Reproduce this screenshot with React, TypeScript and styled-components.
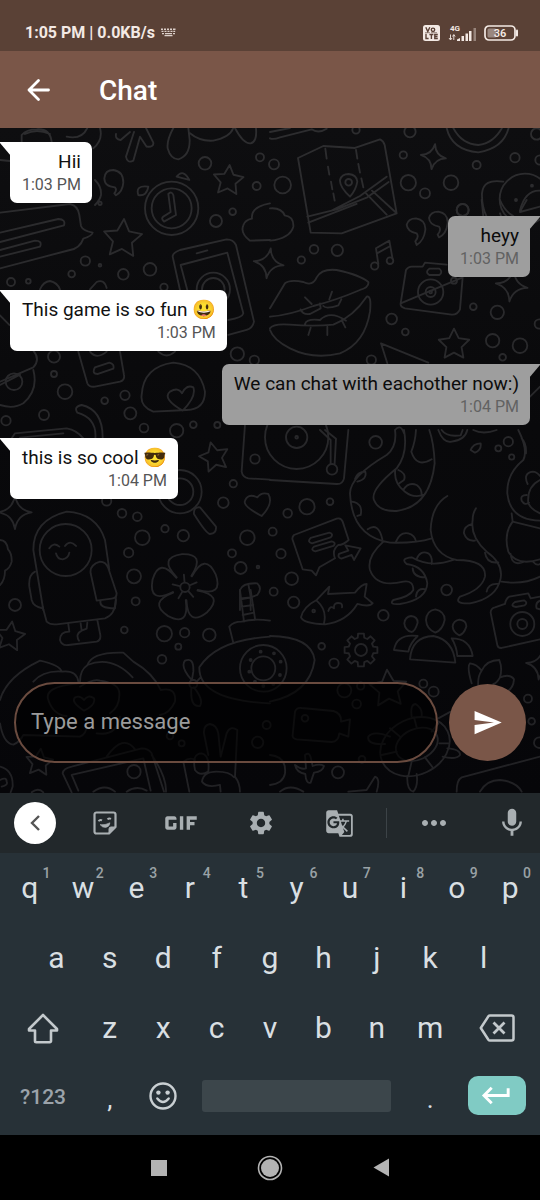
import React, { useState } from "react";
import styled, { createGlobalStyle } from "styled-components";
import {
  MdGif,
  MdGTranslate,
  MdKeyboardReturn,
  MdMic,
  MdMoreHoriz,
  MdSend,
  MdSettings,
} from "react-icons/md";

const GlobalStyle = createGlobalStyle`
  *, *::before, *::after { box-sizing: border-box; }
  body { margin: 0; background: #000; }
  body, button, input { font-family: Roboto, "Noto Color Emoji", sans-serif; }
  button { border: 0; padding: 0; background: none; color: inherit; cursor: pointer; }
  svg { display: block; }
`;

const Screen = styled.div`
  display: flex;
  flex-direction: column;
  min-height: 100vh;
`;

/* ---------- top bars ---------- */

const StatusBar = styled.header`
  display: flex;
  align-items: center;
  justify-content: space-between;
  height: 51px;
  padding: 14px 21px 0 25px;
  background: #5a4136;
  color: #f3e9e4;
`;

const StatusGroup = styled.div<{ $gap: number }>`
  display: flex;
  align-items: center;
  gap: ${(p) => p.$gap}px;
`;

const StatusText = styled.span`
  font-size: 16px;
  line-height: 20px;
  font-weight: 700;
`;

const AppBar = styled.div`
  display: flex;
  align-items: center;
  gap: 46px;
  height: 77px;
  padding: 0 24px;
  background: #7a5648;
  color: #fff;
`;

const Title = styled.h1`
  margin: 0;
  padding-top: 2px;
  font-size: 28px;
  line-height: 36px;
  font-weight: 500;
`;

/* ---------- chat ---------- */

const ChatArea = styled.main`
  position: relative;
  flex: 1;
  display: flex;
  flex-direction: column;
  justify-content: space-between;
  background: linear-gradient(#0e0e10, #09090b 45%, #060609);
`;

const Wallpaper = styled.svg`
  position: absolute;
  inset: 0;
  width: 100%;
  height: 100%;
  fill: none;
  stroke-linecap: round;
  stroke-linejoin: round;
`;

const Messages = styled.ul`
  position: relative;
  display: flex;
  flex-direction: column;
  gap: 13px;
  margin: 0;
  padding: 14px 10px;
  list-style: none;
`;

const Bubble = styled.li<{ $sent: boolean }>`
  position: relative;
  align-self: ${(p) => (p.$sent ? "flex-end" : "flex-start")};
  padding: 7px 11px 7px 12px;
  border-radius: ${(p) => (p.$sent ? "7px 0 7px 7px" : "0 7px 7px 7px")};
  background: ${(p) => (p.$sent ? "#9e9e9e" : "#fff")};
  color: ${(p) => (p.$sent ? "#0c0c0c" : "#111")};
  text-align: right;

  &::before {
    content: "";
    position: absolute;
    top: 0;
    ${(p) => (p.$sent ? "right" : "left")}: -10px;
    width: 11px;
    height: 14px;
    background: inherit;
    clip-path: ${(p) =>
      p.$sent
        ? "polygon(0 0, 100% 0, 100% 8%, 0 100%)"
        : "polygon(0 0, 100% 0, 100% 100%, 0 8%)"};
  }
`;

const MessageText = styled.p`
  margin: 0;
  font-size: 19px;
  line-height: 25px;
`;

const MessageTime = styled.time<{ $sent: boolean }>`
  display: block;
  font-size: 16px;
  line-height: 22px;
  color: ${(p) => (p.$sent ? "#626262" : "#555")};
`;

const Composer = styled.form`
  position: relative;
  display: flex;
  align-items: center;
  gap: 11px;
  padding: 0 14px 30px;
`;

const MessageInput = styled.input`
  flex: 1;
  min-width: 0;
  height: 81px;
  padding: 0 15px 2px;
  border: 2px solid #6a4b3f;
  border-radius: 41px;
  outline: 0;
  background: rgba(0, 0, 0, 0.6);
  color: #fff;
  font-size: 22px;

  &::placeholder {
    color: #9b9b9b;
    opacity: 1;
  }
`;

const SendButton = styled.button`
  display: grid;
  place-items: center;
  width: 77px;
  height: 77px;
  border-radius: 50%;
  background: #7a5648;
  color: #fff;
`;

/* ---------- keyboard ---------- */

const Toolbar = styled.div`
  display: grid;
  grid-template-columns: 70fr 70fr 82fr 78fr 78fr 16fr 80fr 66fr;
  align-items: center;
  height: 60px;
  background: #22282b;
  color: #a9afb2;
`;

const Tool = styled.button<{ $end?: boolean }>`
  display: flex;
  align-items: center;
  justify-content: ${(p) => (p.$end ? "flex-end" : "center")};
  height: 60px;
  min-width: 0;
  padding-right: ${(p) => (p.$end ? 11 : 0)}px;
`;

const CollapseCircle = styled.span`
  display: grid;
  place-items: center;
  width: 42px;
  height: 42px;
  border-radius: 50%;
  background: #fff;
  color: #555;
`;

const ToolDivider = styled.span`
  justify-self: center;
  width: 1px;
  height: 30px;
  background: #3c4347;
`;

const Keys = styled.div`
  display: flex;
  flex-direction: column;
  padding: 0 3px 7px;
  background: #273137;
  color: #d9dfe2;
`;

const KeyRow = styled.div<{ $columns: string; $height?: number; $inset?: number }>`
  display: grid;
  grid-template-columns: ${(p) => p.$columns};
  align-items: center;
  height: ${(p) => p.$height ?? 70}px;
  padding: 0 ${(p) => p.$inset ?? 0}%;
`;

const keyKinds = {
  letter: { size: 30, weight: 400, color: "inherit", top: 0 },
  label: { size: 21, weight: 500, color: "#9ba3aa", top: 2 },
  mark: { size: 26, weight: 400, color: "inherit", top: 6 },
};

const Key = styled.button<{ $kind?: keyof typeof keyKinds }>`
  position: relative;
  display: grid;
  place-items: center;
  height: 65px;
  padding-top: ${(p) => keyKinds[p.$kind ?? "letter"].top}px;
  font-size: ${(p) => keyKinds[p.$kind ?? "letter"].size}px;
  font-weight: ${(p) => keyKinds[p.$kind ?? "letter"].weight};
  line-height: 36px;
  color: ${(p) => keyKinds[p.$kind ?? "letter"].color};
`;

const KeyHint = styled.span`
  position: absolute;
  top: 9px;
  right: 6px;
  font-size: 14px;
  line-height: 16px;
  font-weight: 500;
  color: #9aa2a6;
`;

const SpaceKey = styled.button`
  height: 32px;
  margin: 0 13px 0 12px;
  border-radius: 3px;
  background: #3c464b;
`;

const EnterKey = styled.button`
  display: grid;
  place-items: center;
  justify-self: center;
  width: 58px;
  height: 39px;
  border-radius: 10px;
  background: #80cbc4;
  color: #fff;
`;

const NavBar = styled.nav`
  display: flex;
  justify-content: center;
  height: 65px;
  background: #000;
`;

const NavButton = styled.button`
  display: grid;
  place-items: center;
  width: 111px;
  height: 65px;
`;

/* ---------- icons ---------- */

const StatusKeyboardIcon = () => (
  <svg width="15" height="9" viewBox="0 0 15 9" fill="currentColor" opacity="0.85">
    <path d="M0 .5h2v1.4H0zM3 .5h2v1.4H3zM6 .5h2v1.4H6zM9 .5h2v1.4H9zM12 .5h2.5v1.4H12zM.5 2.7h2v1.4h-2zM3.5 2.7h2v1.4h-2zM6.5 2.7h2v1.4h-2zM9.5 2.7h2v1.4h-2zM12.3 2.7h1.9v1.4h-1.9zM1 4.9h2v1.3H1zM4 4.9h7v1.3H4zM12 4.9h2v1.3h-2zM3.5 7h8v1.3h-8z" />
  </svg>
);

const VolteIcon = () => (
  <svg width="17" height="16" viewBox="0 0 17 16">
    <rect width="17" height="16" rx="2.5" fill="#f3e9e4" />
    <g fill="none" stroke="#5a4136" strokeWidth="1.4">
      <path d="M2.8 2.2 4.8 6.5 6.8 2.2M3 8.8v4.7h2.6M6.4 9.5h4M8.4 9.5v4.6M14.8 9.5h-3v4h3M11.8 11.5h2.7" />
      <circle cx="10" cy="4.8" r="1.7" />
    </g>
    <path d="M2 7.7h5M8 7.7h6" stroke="#5a4136" strokeWidth=".6" />
  </svg>
);

const SignalIcon = () => (
  <svg width="28" height="18" viewBox="0 0 28 18" fill="#f3e9e4">
    <text x="2" y="7" fontSize="8" fontWeight="700">
      4G
    </text>
    <path d="M9 17v-1.5l3-1.5v3zM13.5 12H16v5h-2.5zM17.5 9.5H20V17h-2.5zM21 7h2.500v10H21z" />
    <path d="M25.500 4H28v13h-2.500z" opacity=".4" />
    <path d="M2.500 10.500v5M1 14l1.500 2L4 14M5.800 16v-5M4.500 12.500l1.300-2 1.300 2" stroke="#f3e9e4" strokeWidth=".9" fill="none" />
  </svg>
);

const BatteryIcon = () => (
  <svg width="35" height="16" viewBox="0 0 35 16">
    <rect x="1" y="1" width="30" height="14" rx="4" fill="none" stroke="#f3e9e4" strokeWidth="1.7" />
    <rect x="3.5" y="3.5" width="9" height="9" rx="1.5" fill="#9a8880" />
    <path d="M33 5.500v5" stroke="#f3e9e4" strokeWidth="2" strokeLinecap="round" />
    <text x="16" y="12" textAnchor="middle" fontSize="11" fontWeight="600" fill="#f3e9e4">
      36
    </text>
  </svg>
);

const BackArrowIcon = () => (
  <svg width="29" height="26" viewBox="0 0 29 26" fill="none" stroke="#fff" strokeWidth="2.8" strokeLinecap="round" strokeLinejoin="round">
    <path d="M24.5 13H5M14.5 3.500 5 13l9.500 9.500" />
  </svg>
);

const ChevronIcon = () => (
  <svg width="16" height="18" viewBox="0 0 16 18" fill="none" stroke="currentColor" strokeWidth="2.4">
    <path d="M12 2 5 9l7 7" />
  </svg>
);

const StickerIcon = () => (
  <svg width="24" height="24" viewBox="0 0 24 24" fill="none" stroke="currentColor" strokeWidth="2.2" strokeLinejoin="round">
    <path d="M3.5 1.5h17a2 2 0 0 1 2 2V16l-6.500 6.500H3.500a2 2 0 0 1-2-2v-17a2 2 0 0 1 2-2z" />
    <path d="M22.5 16H18a2 2 0 0 0-2 2v4.500z" fill="currentColor" strokeWidth="1" />
    <path d="M5.5 10.200q1.500-2 3.500-.8M14.500 8.400q1.500-1.600 3.500-.6" strokeWidth="1.900" />
    <path d="M7 13.600q5 .8 10-1.800-.5 4.300-4.300 4.600-3.600.2-5.700-2.800z" fill="currentColor" strokeWidth=".6" />
  </svg>
);

const ShiftIcon = () => (
  <svg width="32" height="32" viewBox="0 0 32 32" fill="none" stroke="#c3c9cc" strokeWidth="2.600" strokeLinejoin="round">
    <path d="M16 3 2 17v1.500h6V29a1.200 1.200 0 0 0 1.200 1.200h13.600A1.200 1.200 0 0 0 24 29V18.500h6V17z" />
  </svg>
);

const BackspaceIcon = () => (
  <svg width="36" height="28" viewBox="0 0 36 28" fill="none" stroke="#c3c9cc" strokeWidth="2.500" strokeLinejoin="round">
    <path d="M11 1.500h21.500a2 2 0 0 1 2 2v21a2 2 0 0 1-2 2H11q-1 0-1.600-.8L1.800 14 9.400 2.300Q10 1.500 11 1.500z" />
    <path d="m14.500 8.500 11 11M25.500 8.500l-11 11" strokeWidth="2.800" />
  </svg>
);

const SmileyIcon = () => (
  <svg width="28" height="28" viewBox="0 0 28 28" fill="none" stroke="#c9cfd2" strokeWidth="2.400">
    <circle cx="14" cy="14" r="12.500" />
    <path d="M8.300 16.500q5.700 7 11.400 0" strokeLinecap="round" />
    <circle cx="9.400" cy="10.600" r="2.200" fill="#c9cfd2" stroke="none" />
    <circle cx="18.600" cy="10.600" r="2.200" fill="#c9cfd2" stroke="none" />
  </svg>
);

/* ---------- wallpaper ---------- */

const polar = (cx: number, cy: number, r: number, deg: number) => {
  const a = (deg * Math.PI) / 180;
  return `${(cx + r * Math.sin(a)).toFixed(1)} ${(cy - r * Math.cos(a)).toFixed(1)}`;
};

const Star = ({ x, y, r, turn = 0 }: { x: number; y: number; r: number; turn?: number }) => (
  <path
    d={
      "M" +
      Array.from({ length: 10 }, (_, i) => polar(x, y, i % 2 ? r * 0.5 : r, turn + i * 36)).join("L") +
      "Z"
    }
  />
);

const Sparkle = ({ x, y, r, turn = 8 }: { x: number; y: number; r: number; turn?: number }) => (
  <path
    d={
      "M" +
      polar(x, y, r, turn) +
      [0, 90, 180, 270]
        .map((d) => `Q${polar(x, y, r * 0.2, turn + d + 45)} ${polar(x, y, r, turn + d + 90)}`)
        .join("") +
      "Z"
    }
  />
);

const Gear = ({ x, y, r }: { x: number; y: number; r: number }) => (
  <>
    <path
      d={
        "M" +
        Array.from({ length: 8 }, (_, i) =>
          [
            polar(x, y, r * 0.76, i * 45 - 15),
            polar(x, y, r, i * 45 - 10),
            polar(x, y, r, i * 45 + 10),
            polar(x, y, r * 0.76, i * 45 + 15),
          ].join("L"),
        ).join("L") +
        "Z"
      }
    />
    <circle cx={x} cy={y} r={r * 0.36} />
  </>
);

const Flower = ({ x, y }: { x: number; y: number }) => (
  <g transform={`translate(${x} ${y})`}>
    {[0, 72, 144, 216, 288].map((a) => (
      <g key={a} transform={`rotate(${a - 5})`}>
        <path d="M-22 -32Q-74 -96 0 -100Q72 -96 22 -32" />
        <path d="M0 -16V-38" />
      </g>
    ))}
    <circle r="14" />
  </g>
);

type Dot = [number, number, number];

type Patch = { x: number; y: number; dots: Dot[]; lines: string[]; shapes?: React.ReactNode };

/* Each patch is a piece of the wallpaper, drawn at three times its size. */
const patches: Patch[] = [
  {
    x: 0,
    y: 0,
    dots: [[615, 490, 19], [780, 472, 12], [770, 558, 12], [515, 625, 80], [515, 625, 60]],
    lines: [
      "M65 425V405Q80 388 110 388Q150 385 155 425M75 402Q110 385 150 402",
      "M200 410Q245 420 262 384M300 384Q310 420 280 445",
      "M348 402Q345 418 362 420L390 396M402 396L378 470Q382 492 400 482L420 410L440 440Q462 442 460 428L438 384",
      "M520 384Q500 420 503 445Q512 478 535 478Q570 468 569 420L565 384",
      "M570 400Q600 425 640 422Q690 412 700 384M705 384Q730 432 752 430Q772 425 768 384",
      "M345 562Q313 560 313 535Q315 510 340 510Q370 514 370 548Q368 575 348 586L343 580Q352 570 345 562Z",
      "M285 540Q305 560 303 585Q300 600 285 615",
      "M415 585Q405 555 445 560Q440 590 415 585ZM530 530Q550 505 568 540Z",
      "M505 582Q515 572 520 585L528 645L492 665Q482 655 490 650L512 636Z",
      "M0 480L30 483",
    ],
    shapes: <Star x={685} y={542} r={47} turn={5} />,
  },
  {
    x: 270,
    y: 0,
    dots: [
      [258, 390, 11], [420, 395, 17], [400, 465, 11], [12, 493, 15], [38, 555, 25], [415, 548, 23],
      [543, 548, 22], [465, 580, 15], [620, 495, 12], [735, 473, 14], [800, 402, 17], [578, 630, 18],
      [765, 597, 76], [738, 600, 3], [786, 557, 3], [236, 547, 10], [810, 480, 14],
    ],
    lines: [
      "M0 396L60 384M0 415Q10 420 30 412L125 388Q145 402 170 386",
      "M84 474L160 438L255 444L330 418Q340 422 344 435L380 640L215 700L122 698Z",
      "M166 446L170 476M174 500L178 524M183 545L187 568M190 580L194 602M258 450L262 476M265 492L270 518M274 535L280 562",
      "M240 590Q208 560 210 540Q215 522 236 522Q260 524 262 545Q258 570 240 590Z",
      "M185 632L270 588L350 530M112 650L200 628L292 592L356 546M288 580L350 644M306 572L376 636M115 668L260 612",
      "M530 384Q545 450 625 457Q700 445 716 384M550 384Q575 432 625 435Q670 430 696 384",
      "M700 545Q640 535 636 580Q635 620 650 650M750 632Q765 570 810 572M690 640Q700 675 730 690",
    ],
    shapes: <Sparkle x={490} y={470} r={38} />,
  },
  {
    x: 0,
    y: 200,
    dots: [
      [648, 63, 18], [698, 35, 10], [256, 183, 14], [300, 196, 4], [215, 222, 10], [370, 223, 16],
      [450, 208, 19], [33, 246, 12], [85, 244, 7], [492, 262, 11], [640, 268, 50], [640, 268, 34],
      [42, 545, 25], [162, 470, 18], [162, 522, 9], [195, 575, 22], [712, 462, 20], [763, 481, 14],
      [300, 10, 5],
    ],
    lines: [
      "M0 38L210 12Q235 18 238 45L243 78Q248 92 278 98Q276 108 250 116Q240 145 210 150L0 205",
      "M0 98L175 57Q198 58 192 76L0 126M0 150L105 122Q128 122 120 140L0 170",
      "M810 120L750 122Q720 100 730 76Q735 60 756 56Q752 20 810 10",
      "M540 270L518 170Q518 158 540 150L680 118Q700 118 708 135L762 365Q758 385 740 390L685 405",
      "M562 270L542 195L682 158L730 340Q728 352 685 360M590 160L622 151",
      "M120 268Q130 245 150 243Q172 248 180 268M270 268L290 246Q312 236 320 264",
      "M0 545L100 502Q122 478 100 452M0 555L60 524M100 510Q116 570 70 610Q40 628 0 615M0 346L28 375",
      "M235 455L262 550Q268 562 285 560L360 545Q375 540 372 525L360 455",
      "M285 502L328 488Q344 492 340 506L294 522Q274 522 285 502ZM270 455Q290 480 320 455M475 455Q500 478 525 455",
      "M425 585Q430 500 520 488Q600 495 615 575Q615 628 560 630L460 635Q420 620 425 585Z",
      "M548 632Q485 595 510 575Q535 560 546 580Q560 552 580 562Q590 590 548 632Z",
    ],
    shapes: (
      <>
        <Star x={368} y={117} r={60} turn={4} />
        <Sparkle x={806} y={190} r={45} />
      </>
    ),
  },
  {
    x: 270,
    y: 200,
    dots: [
      [578, 30, 18], [132, 148, 13], [94, 180, 11], [202, 151, 17], [365, 357, 16], [406, 396, 10],
      [610, 320, 10], [682, 337, 20], [668, 422, 20], [750, 437, 22], [698, 472, 10], [304, 480, 14],
      [552, 242, 9], [808, 372, 14], [482, 276, 38], [482, 276, 15], [482, 276, 4], [314, 198, 11], [360, 182, 10],
    ],
    lines: [
      "M0 25Q34 22 44 46Q72 50 70 80Q60 115 0 122",
      "M440 100Q412 95 410 74Q415 55 438 55Q468 60 466 90Q462 122 440 135L436 124Q448 110 440 100Z",
      "M507 80Q479 75 477 54Q482 35 505 35Q535 40 533 70Q529 102 507 112L503 104Q515 90 507 80Z",
      "M325 192L318 145L358 122L368 178M321 160L361 138",
      "M0 325L45 250Q60 238 100 246Q128 260 140 232Q155 205 200 210Q270 225 295 246Q298 262 270 270Q200 300 130 318Q60 345 0 350",
      "M0 385Q10 370 60 374Q130 380 190 374Q250 350 290 290Q305 285 300 335Q285 430 210 460Q130 480 60 445Q10 420 0 390",
      "M92 328Q98 345 120 342L152 325L150 310M160 318Q168 328 205 316L214 298M105 292L125 312M186 275L178 298",
      "M105 372Q110 355 150 360Q180 330 228 362M122 383L115 405M172 380V405M215 360L226 382",
      "M392 310L408 210Q415 198 430 200L458 200L465 188L530 194M578 232L570 328Q562 345 545 344L405 325Q390 320 392 310Z",
      "M478 206H508Q520 216 508 225H478Q464 216 478 206Z",
      "M352 490L333 430L475 488M635 0L640 48M690 0Q705 35 730 48M750 35L770 0M750 36L810 20",
      "M780 590L810 560",
    ],
    shapes: (
      <>
        <Sparkle x={725} y={257} r={48} />
        <Star x={552} y={434} r={48} />
      </>
    ),
  },
  {
    x: 0,
    y: 390,
    dots: [
      [375, 16, 14], [314, 32, 10], [391, 70, 18], [132, 75, 15], [18, 92, 14], [432, 114, 13],
      [530, 122, 20], [580, 104, 10], [652, 105, 9], [765, 207, 14], [700, 281, 11], [670, 338, 16],
      [366, 370, 13], [412, 380, 13], [495, 416, 11], [427, 443, 22], [550, 437, 17], [742, 443, 22],
      [386, 488, 14], [696, 490, 12], [722, 534, 18], [774, 531, 4], [402, 559, 21], [407, 634, 12],
      [45, 645, 18], [320, 333, 14], [540, 305, 65], [540, 305, 40], [197, 480, 78],
    ],
    lines: [
      "M308 147Q310 60 245 45Q220 50 232 68Q292 85 286 147M35 145L45 130L200 115Q230 120 250 145M60 143L190 130",
      "M735 105L725 245Q728 262 745 265L810 269",
      "M582 372Q580 350 600 352L648 410Q650 430 630 432Q618 430 582 372Z",
      "M785 378Q735 352 734 336Q742 308 772 322Q785 305 805 312Q822 340 785 378Z",
      "M130 660L100 480Q100 390 200 365Q290 370 315 450L328 540",
      "M148 475Q160 455 178 470M195 468Q210 448 228 468M168 490Q172 508 188 508Q205 505 208 488",
      "M272 550Q268 525 300 515Q318 515 325 535L350 610Q350 625 335 626L290 632Z",
      "M105 545Q85 555 88 590L95 630Q100 650 128 655M302 632Q295 655 345 655L348 620",
      "M0 450Q20 450 24 478Q36 490 35 515Q30 535 15 542Q15 570 0 585",
      "M720 660L720 600Q728 578 772 580Q788 595 772 615L752 622V660M722 625L752 622M745 582L752 620",
    ],
    shapes: (
      <>
        <Star x={643} y={202} r={46} turn={-14} />
        <Sparkle x={45} y={367} r={50} turn={0} />
        <Flower x={555} y={592} />
      </>
    ),
  },
  {
    x: 270,
    y: 430,
    dots: [
      [80, 22, 32], [80, 22, 4], [80, 22, 95], [186, 118, 16], [317, 37, 19], [715, 35, 14], [685, 55, 9],
      [725, 81, 8], [111, 230, 23], [180, 215, 10], [53, 250, 13], [8, 305, 12], [33, 371, 14],
      [65, 446, 19], [11, 485, 12], [71, 517, 17], [340, 556, 16], [530, 480, 16], [155, 649, 10],
      [192, 700, 14], [131, 543, 4], [757, 582, 36], [757, 582, 15],
    ],
    lines: [
      "M235 0L222 145Q218 163 200 162L0 150M165 0L198 26L194 100M150 0L182 30L182 100",
      "M375 0Q382 50 350 75Q240 140 240 190Q245 320 360 338Q440 340 485 325M375 0Q392 -20 402 10",
      "M402 0Q415 70 380 115Q300 180 312 210Q325 245 380 243Q480 230 494 100Q492 40 478 0",
      "M438 0Q436 35 424 65Q440 115 485 88M376 118Q370 160 405 185Q430 205 460 195",
      "M255 147Q262 125 286 125Q292 148 262 155M245 215Q280 220 272 255L262 258M293 298Q325 275 337 328",
      "M378 335Q390 305 415 310Q435 315 438 335M385 120Q410 130 402 150L388 160M400 180Q415 155 440 165Q455 175 455 195",
      "M532 198Q485 225 482 300Q490 375 560 390Q650 390 645 440Q635 480 570 500Q550 522 600 520Q680 505 692 445Q700 400 650 365Q600 320 608 270Q608 250 618 235",
      "M340 335Q290 380 300 420Q320 475 400 455Q430 450 430 480Q420 500 370 510Q355 525 390 522Q470 510 472 460Q465 410 410 402Q390 385 425 382Q480 415 550 390",
      "M607 282Q580 290 582 310Q590 335 615 332M645 368Q650 402 685 397M650 485Q655 458 687 462M440 387Q450 360 475 370Q488 380 485 402M428 415Q430 442 466 442M438 500Q440 472 468 478",
      "M505 0Q520 40 545 35Q585 30 592 0M515 0Q530 22 572 16L578 0M610 0Q640 15 680 0M602 60Q610 40 632 40Q635 60 615 68Z",
      "M745 0Q775 60 760 90Q710 130 712 190Q720 270 810 272M755 25Q770 40 768 70",
      "M773 162Q758 130 788 125Q800 125 810 138M810 150Q770 170 775 220Q785 240 810 250M770 195Q750 195 755 212Q765 228 777 218",
      "M725 250L728 275L810 295M728 275Q700 310 715 365Q740 410 810 388M722 372Q726 410 760 396M790 396Q800 408 810 402M695 455Q760 465 810 440",
      "M72 315Q65 322 68 330L98 418L125 422L138 436L148 412L195 385Q185 360 205 345Q220 345 236 330L218 275Q213 262 200 266Z",
      "M122 324L178 308Q192 312 182 322L126 340Q110 336 122 324ZM132 350L185 334Q200 338 190 348L136 364Q120 360 132 350Z",
      "M207 372L235 362L226 346L272 355L252 390L245 375L214 386Q202 382 207 372Z",
      "M93 562Q100 530 140 510L178 470L174 492L255 488Q275 462 290 462L284 500L308 520Q300 532 262 522Q230 575 165 583Q100 580 93 562ZM140 512Q172 540 162 580",
      "M175 543Q180 525 192 535Q190 515 212 520Q218 524 216 532",
      "M420 688Q425 620 490 618Q550 630 556 698ZM372 660Q380 610 443 618Q420 640 415 665ZM545 625Q600 625 608 678L562 678Q560 650 545 625Z",
      "M423 558Q443 560 443 578Q435 605 424 606Q405 600 403 580Q405 560 423 558ZM496 538Q525 545 524 570Q518 600 496 608Q470 598 468 570Q470 542 496 538ZM568 569Q590 572 589 590Q582 612 568 616Q550 608 548 590Q550 572 568 569Z",
      "M810 628L695 654Q684 655 682 645L662 548Q662 535 675 532L705 522Q708 505 718 500L775 490L782 505L810 500",
      "M735 516L762 511Q775 518 764 526L738 531Q718 528 735 516ZM810 512Q795 518 800 535L810 538",
    ],
    shapes: <Gear x={273} y={660} r={50} />,
  },
  {
    x: 0,
    y: 590,
    dots: [
      [373, 120, 10], [493, 131, 23], [554, 128, 14], [628, 135, 19], [535, 170, 9], [486, 208, 13],
      [510, 438, 10], [545, 460, 9], [773, 457, 17], [402, 545, 20], [800, 405, 12], [790, 235, 70],
      [790, 235, 36], [752, 210, 3], [782, 185, 3], [748, 245, 3], [765, 275, 3], [822, 190, 3],
      [842, 215, 3], [840, 255, 3], [820, 282, 3], [790, 288, 3], [580, 282, 12],
    ],
    lines: [
      "M128 50L140 95Q150 105 170 103L315 85Q345 75 348 30M205 103L208 125Q180 125 180 150Q185 168 205 165L290 155Q305 150 300 130L292 90",
      "M242 100L245 122Q225 132 237 152M262 98L260 116L245 122",
      "M720 0L732 95M752 0L765 85M722 28L755 22M725 50L760 45M728 75L762 68",
      "M810 140Q650 150 598 232Q596 330 810 340M700 158L688 110Q700 95 725 95Q760 85 810 92",
      "M575 270Q540 230 555 212Q582 200 580 245L576 268M582 292Q612 330 600 348Q570 352 574 295M590 275L602 262",
      "M0 330Q20 260 120 212Q180 225 185 245Q230 240 235 275M100 275Q130 240 190 245",
      "M240 275Q240 240 262 226Q275 185 370 188L400 215Q460 250 482 300Q530 290 525 335Q510 370 480 375M262 225Q335 195 398 262",
      "M240 290Q280 265 300 272Q358 280 358 310Q360 350 330 370M235 280Q130 290 145 330Q160 375 200 378",
      "M252 362Q210 335 226 322Q240 315 252 330Q265 312 282 325Q288 345 252 362Z",
      "M0 400Q10 460 40 464Q60 455 70 435L240 440Q262 430 260 400M290 430Q350 440 360 380",
      "M215 607L188 550Q190 535 215 530L425 475Q445 475 455 490L492 605M235 602L215 555L430 505L452 602M320 500Q370 430 405 478M455 495Q500 560 498 605",
      "M280 605Q315 580 345 605M380 605Q410 585 440 602M95 607Q115 592 130 607",
      "M625 495L612 430Q610 405 630 402Q650 405 655 430L662 500L680 430Q690 405 712 420L705 560Q720 580 720 605",
      "M585 510Q570 500 550 515L568 605M585 540Q575 490 605 490Q630 495 625 545Q600 560 585 540ZM606 575Q610 545 650 545Q690 545 702 562M606 575Q620 595 660 585L662 605",
      "M0 530Q40 540 38 590L32 607M0 570Q20 560 20 575Q25 585 5 590",
    ],
    shapes: (
      <>
        <Star x={30} y={140} r={46} turn={8} />
        <Star x={118} y={518} r={42} turn={6} />
      </>
    ),
  },
  {
    x: 270,
    y: 640,
    dots: [
      [223, 151, 21], [272, 138, 11], [260, 192, 13], [460, 131, 12], [491, 155, 15], [774, 176, 12],
      [785, 244, 10], [204, 397, 18], [276, 358, 10], [105, 235, 10], [808, 308, 16],
    ],
    lines: [
      "M0 -12Q125 -10 134 60Q120 160 0 185",
      "M68 285L75 215Q80 202 95 204L190 213Q215 220 213 245L240 238L235 290L208 280Q205 305 185 306L80 298Q66 295 68 285Z",
      "M425 230Q420 192 437 192Q458 205 455 228M505 235L542 215M532 325Q572 328 570 345Q558 360 518 350M412 408Q410 450 430 455Q445 440 440 402M345 312Q290 315 295 290Q310 270 360 290",
      "M360 265L390 290M432 232L440 262M505 250L485 275M535 310L508 310M490 385L465 352M415 408L425 365M335 345L380 335",
      "M605 130Q590 80 600 70Q620 72 635 92Q650 60 688 60Q698 85 690 112Q720 100 732 118Q730 150 700 160M635 92Q622 110 625 140M690 112Q680 130 670 132",
      "M75 375Q95 390 108 385L105 345Q118 335 122 352L128 378Q150 370 162 378Q158 395 132 398L122 428Q108 432 106 402Q80 398 75 375Z",
      "M0 345Q50 350 45 400Q40 430 0 435M560 455Q560 420 575 412L810 350M630 455Q650 420 690 420Q740 425 755 455M235 455L290 450L315 410Q332 415 320 455M30 455Q60 430 100 455",
    ],
    shapes: (
      <>
        <g transform="rotate(-25 435 320)">
          <ellipse cx="435" cy="320" rx="108" ry="84" />
          <ellipse cx="443" cy="316" rx="66" ry="46" />
        </g>
        <Star x={355} y={147} r={58} turn={-4} />
        <Sparkle x={812} y={75} r={44} />
      </>
    ),
  },
];

const DoodleWallpaper = () => (
  <Wallpaper viewBox="0 128 540 665" preserveAspectRatio="xMidYMin slice" aria-hidden="true">
    <defs>
      <linearGradient id="ink" gradientUnits="userSpaceOnUse" x1="0" y1="128" x2="0" y2="793">
        <stop offset="0" stopColor="#2d2d2f" />
        <stop offset="1" stopColor="#212124" />
      </linearGradient>
      <mask id="doodles" maskUnits="userSpaceOnUse" x="0" y="128" width="540" height="665">
        <g stroke="#fff" strokeWidth="5.500">
          {patches.map((p) => (
            <g key={`${p.x}-${p.y}`} transform={`translate(${p.x} ${p.y}) scale(0.3333)`}>
              {p.dots.map(([cx, cy, r], i) => (
                <circle key={i} cx={cx} cy={cy} r={r} />
              ))}
              <path d={p.lines.join("")} />
              {p.shapes}
            </g>
          ))}
        </g>
      </mask>
    </defs>
    <rect x="0" y="128" width="540" height="665" fill="url(#ink)" mask="url(#doodles)" />
  </Wallpaper>
);

/* ---------- data ---------- */

const messages = [
  { text: "Hii", time: "1:03 PM", sent: false },
  { text: "heyy", time: "1:03 PM", sent: true },
  { text: "This game is so fun 😃", time: "1:03 PM", sent: false },
  { text: "We can chat with eachother now:)", time: "1:04 PM", sent: true },
  { text: "this is so cool 😎", time: "1:04 PM", sent: false },
];

export default function App() {
  const [draft, setDraft] = useState("");
  const type = (s: string) => setDraft((d) => d + s);

  return (
    <>
      <GlobalStyle />
      <Screen>
        <StatusBar>
          <StatusGroup $gap={6}>
            <StatusText>1:05 PM | 0.0KB/s</StatusText>
            <StatusKeyboardIcon />
          </StatusGroup>
          <StatusGroup $gap={8}>
            <VolteIcon />
            <SignalIcon />
            <BatteryIcon />
          </StatusGroup>
        </StatusBar>

        <AppBar>
          <button type="button" aria-label="Back">
            <BackArrowIcon />
          </button>
          <Title>Chat</Title>
        </AppBar>

        <ChatArea>
          <DoodleWallpaper />
          <Messages>
            {messages.map((m) => (
              <Bubble key={m.text} $sent={m.sent}>
                <MessageText>{m.text}</MessageText>
                <MessageTime $sent={m.sent}>{m.time}</MessageTime>
              </Bubble>
            ))}
          </Messages>
          <Composer onSubmit={(e) => e.preventDefault()}>
            <MessageInput
              aria-label="Message"
              placeholder="Type a message"
              value={draft}
              onChange={(e) => setDraft(e.target.value)}
            />
            <SendButton type="submit" aria-label="Send">
              <MdSend size={31} />
            </SendButton>
          </Composer>
        </ChatArea>

        <Toolbar>
          <Tool type="button" aria-label="Collapse toolbar">
            <CollapseCircle>
              <ChevronIcon />
            </CollapseCircle>
          </Tool>
          <Tool type="button" aria-label="Stickers">
            <StickerIcon />
          </Tool>
          <Tool type="button" aria-label="GIF">
            <MdGif size={54} />
          </Tool>
          <Tool type="button" aria-label="Settings">
            <MdSettings size={28} />
          </Tool>
          <Tool type="button" aria-label="Translate">
            <MdGTranslate size={29} />
          </Tool>
          <ToolDivider />
          <Tool type="button" aria-label="More">
            <MdMoreHoriz size={36} />
          </Tool>
          <Tool type="button" aria-label="Voice input" $end>
            <MdMic size={34} />
          </Tool>
        </Toolbar>

        <Keys>
          <KeyRow $columns="repeat(10, 1fr)">
            {[..."qwertyuiop"].map((c, i) => (
              <Key key={c} type="button" onClick={() => type(c)}>
                {c}
                <KeyHint>{(i + 1) % 10}</KeyHint>
              </Key>
            ))}
          </KeyRow>
          <KeyRow $columns="repeat(9, 1fr)" $inset={5}>
            {[..."asdfghjkl"].map((c) => (
              <Key key={c} type="button" onClick={() => type(c)}>
                {c}
              </Key>
            ))}
          </KeyRow>
          <KeyRow $columns="3fr repeat(7, 2fr) 3fr">
            <Key type="button" aria-label="Shift">
              <ShiftIcon />
            </Key>
            {[..."zxcvbnm"].map((c) => (
              <Key key={c} type="button" onClick={() => type(c)}>
                {c}
              </Key>
            ))}
            <Key type="button" aria-label="Backspace" onClick={() => setDraft((d) => d.slice(0, -1))}>
              <BackspaceIcon />
            </Key>
          </KeyRow>
          <KeyRow $columns="3fr 2fr 2fr 8fr 2fr 3fr" $height={65}>
            <Key type="button" $kind="label">
              ?123
            </Key>
            <Key type="button" $kind="mark" onClick={() => type(",")}>
              ,
            </Key>
            <Key type="button" aria-label="Emoji">
              <SmileyIcon />
            </Key>
            <SpaceKey type="button" aria-label="Space" onClick={() => type(" ")} />
            <Key type="button" $kind="mark" onClick={() => type(".")}>
              .
            </Key>
            <EnterKey type="button" aria-label="Enter">
              <MdKeyboardReturn size={35} />
            </EnterKey>
          </KeyRow>
        </Keys>

        <NavBar>
          <NavButton type="button" aria-label="Recent apps">
            <svg width="16" height="16" viewBox="0 0 16 16">
              <rect width="16" height="16" fill="#b3b3b3" />
            </svg>
          </NavButton>
          <NavButton type="button" aria-label="Home">
            <svg width="26" height="26" viewBox="0 0 26 26">
              <circle cx="13" cy="13" r="11.500" fill="none" stroke="#b3b3b3" strokeWidth="1.600" />
              <circle cx="13" cy="13" r="9" fill="#b3b3b3" />
            </svg>
          </NavButton>
          <NavButton type="button" aria-label="Back">
            <svg width="17" height="19" viewBox="0 0 17 19">
              <path d="M16 .5v18L.5 9.500z" fill="#b3b3b3" />
            </svg>
          </NavButton>
        </NavBar>
      </Screen>
    </>
  );
}
